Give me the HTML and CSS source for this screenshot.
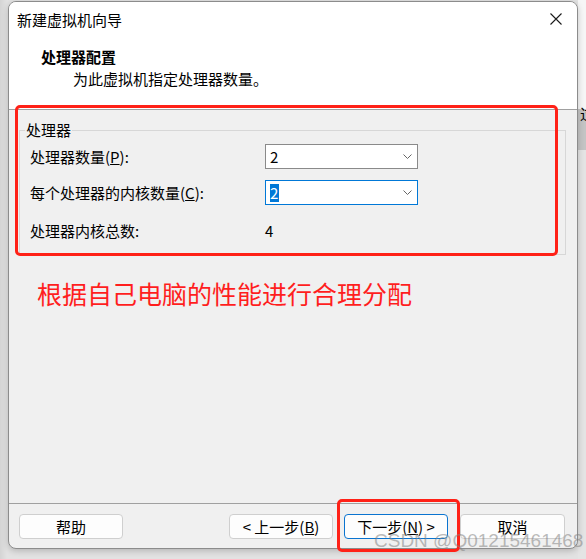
FILE: index.html
```html
<!DOCTYPE html>
<html lang="zh-CN">
<head>
<meta charset="utf-8">
<title>新建虚拟机向导</title>
<link rel="stylesheet" href="styles.css">
</head>
<body>
<div class="desk">
  <div class="backwin"><span>过</span></div>
  <div class="dialog">
    <div class="header">
      <div class="titlebar">
        <span class="title">新建虚拟机向导</span>
        <svg class="close" width="12" height="12" viewBox="0 0 12 12"><path d="M0.5 0.5 L11.5 11.5 M11.5 0.5 L0.5 11.5" stroke="#1a1a1a" stroke-width="1.1" fill="none"/></svg>
      </div>
      <div class="h-title">处理器配置</div>
      <div class="h-sub">为此虚拟机指定处理器数量。</div>
    </div>
    <div class="body">
      <fieldset class="group">
        <legend>处理器</legend>
        <div class="rows">
          <div class="row r1">
            <span>处理器数量(<u>P</u>):</span>
            <div class="combo"><span>2</span><svg width="9" height="5" viewBox="0 0 9 5"><path d="M0.5 0.5 L4.5 4.5 L8.5 0.5" stroke="#666" fill="none"/></svg></div>
          </div>
          <div class="row r2">
            <span>每个处理器的内核数量(<u>C</u>):</span>
            <div class="combo focus"><span class="sel">2</span><svg width="9" height="5" viewBox="0 0 9 5"><path d="M0.5 0.5 L4.5 4.5 L8.5 0.5" stroke="#666" fill="none"/></svg></div>
          </div>
          <div class="row r3">
            <span>处理器内核总数:</span>
            <span class="total">4</span>
          </div>
        </div>
      </fieldset>
      <p class="note">根据自己电脑的性能进行合理分配</p>
    </div>
    <div class="footer">
      <button class="btn">帮助</button>
      <button class="btn back">&lt; 上一步(<u>B</u>)</button>
      <button class="btn primary">下一步(<u>N</u>) &gt;</button>
      <button class="btn cancel">取消</button>
    </div>
  </div>
  <div class="mark mark-group"></div>
  <div class="mark mark-next"></div>
  <div class="watermark">CSDN @Q01215461468</div>
</div>
</body>
</html>
```
FILE: styles.css
```css
* { box-sizing: border-box; }
html, body { margin: 0; padding: 0; }
body {
  background: #dcdcdc;
  font-family: "Noto Sans CJK SC", "Noto Sans", sans-serif;
  font-size: 15px;
  color: #000;
  overflow: hidden;
}
.desk {
  position: relative;
  width: 586px;
  height: 559px;
  padding: 1px 0 0 8px;
  background: linear-gradient(90deg, #d4d4d4 0, #e2e2e2 7px);
}
.backwin {
  position: absolute;
  left: 578px;
  top: 0;
  width: 8px;
  height: 559px;
  overflow: hidden;
  background: linear-gradient(#f6f6f6 0, #f6f6f6 109px, #c4c4c4 109px, #c4c4c4 150px, #e4e4e4 150px);
}
.backwin span {
  position: absolute;
  left: 2px;
  top: 104px;
  font-size: 15px;
  line-height: 20px;
}
.dialog {
  position: relative;
  width: 570px;
  height: 548px;
  border: 1px solid #8c8c8c;
  border-radius: 8px;
  background: #f0f0f0;
  display: flex;
  flex-direction: column;
  box-shadow: 0 2px 6px rgba(0, 0, 0, 0.2);
}
.header {
  height: 108px;
  flex: none;
  background: #fff;
  border-bottom: 1px solid #a0a0a0;
  border-radius: 7px 7px 0 0;
}
.titlebar {
  display: flex;
  justify-content: space-between;
  align-items: center;
  height: 28px;
  padding: 8px 15px 0 8px;
}
.title { line-height: 20px; }
.close { margin-top: -2px; }
.h-title {
  margin-top: 17px;
  padding-left: 32px;
  line-height: 20px;
  font-weight: bold;
}
.h-sub {
  margin-top: 2px;
  padding-left: 64px;
  line-height: 20px;
}
.body { flex: 1; }
.group {
  margin: 10px 11px 0 10px;
  padding: 0 0 11px 0;
  border: 1px solid #d7d7d7;
  min-width: 0;
}
.group legend {
  margin-left: 5px;
  padding: 0 1px;
  line-height: 20px;
}
.rows { padding-left: 10px; }
.row {
  display: grid;
  grid-template-columns: 235px 153px;
  align-items: center;
  height: 25px;
  line-height: 20px;
}
.r1 { margin-top: 4px; }
.r2 { margin-top: 11px; }
.r3 { margin-top: 13px; }
.combo {
  height: 25px;
  border: 1px solid #8a8a8a;
  background: #fff;
  display: flex;
  align-items: center;
  justify-content: space-between;
  padding: 0 5px 0 4px;
}
.combo.focus { border-color: #0078d7; }
.sel {
  background: #0078d7;
  color: #fff;
  line-height: 18px;
  padding: 0 1px 0 0;
}
.note {
  margin: 23px 0 0 0;
  padding-left: 28px;
  font-size: 25px;
  line-height: 30px;
  color: #ff1e1e;
}
.footer {
  flex: none;
  height: 45px;
  border-top: 1px solid #a0a0a0;
  padding: 10px 12px 9px 10px;
  display: flex;
}
.btn {
  width: 104px;
  height: 25px;
  padding: 0;
  border: 1px solid #cfcfcf;
  border-radius: 4px;
  background: #fdfdfd;
  font-family: inherit;
  font-size: 15px;
  line-height: 21px;
  color: #000;
}
.back { margin-left: auto; }
.primary { margin-left: 11px; border-color: #0a74d0; }
.cancel { margin-left: 12px; width: 105px; }
.mark {
  position: absolute;
  border: 3px solid #ff2117;
  border-radius: 5px;
}
.mark-group { left: 15px; top: 105px; width: 543px; height: 151px; }
.mark-next { left: 337px; top: 499px; width: 123px; height: 53px; }
.watermark {
  position: absolute;
  left: 374px;
  top: 529px;
  font-family: "Liberation Sans", sans-serif;
  font-size: 19px;
  line-height: 24px;
  color: rgba(130, 130, 130, 0.55);
  white-space: nowrap;
}
```
